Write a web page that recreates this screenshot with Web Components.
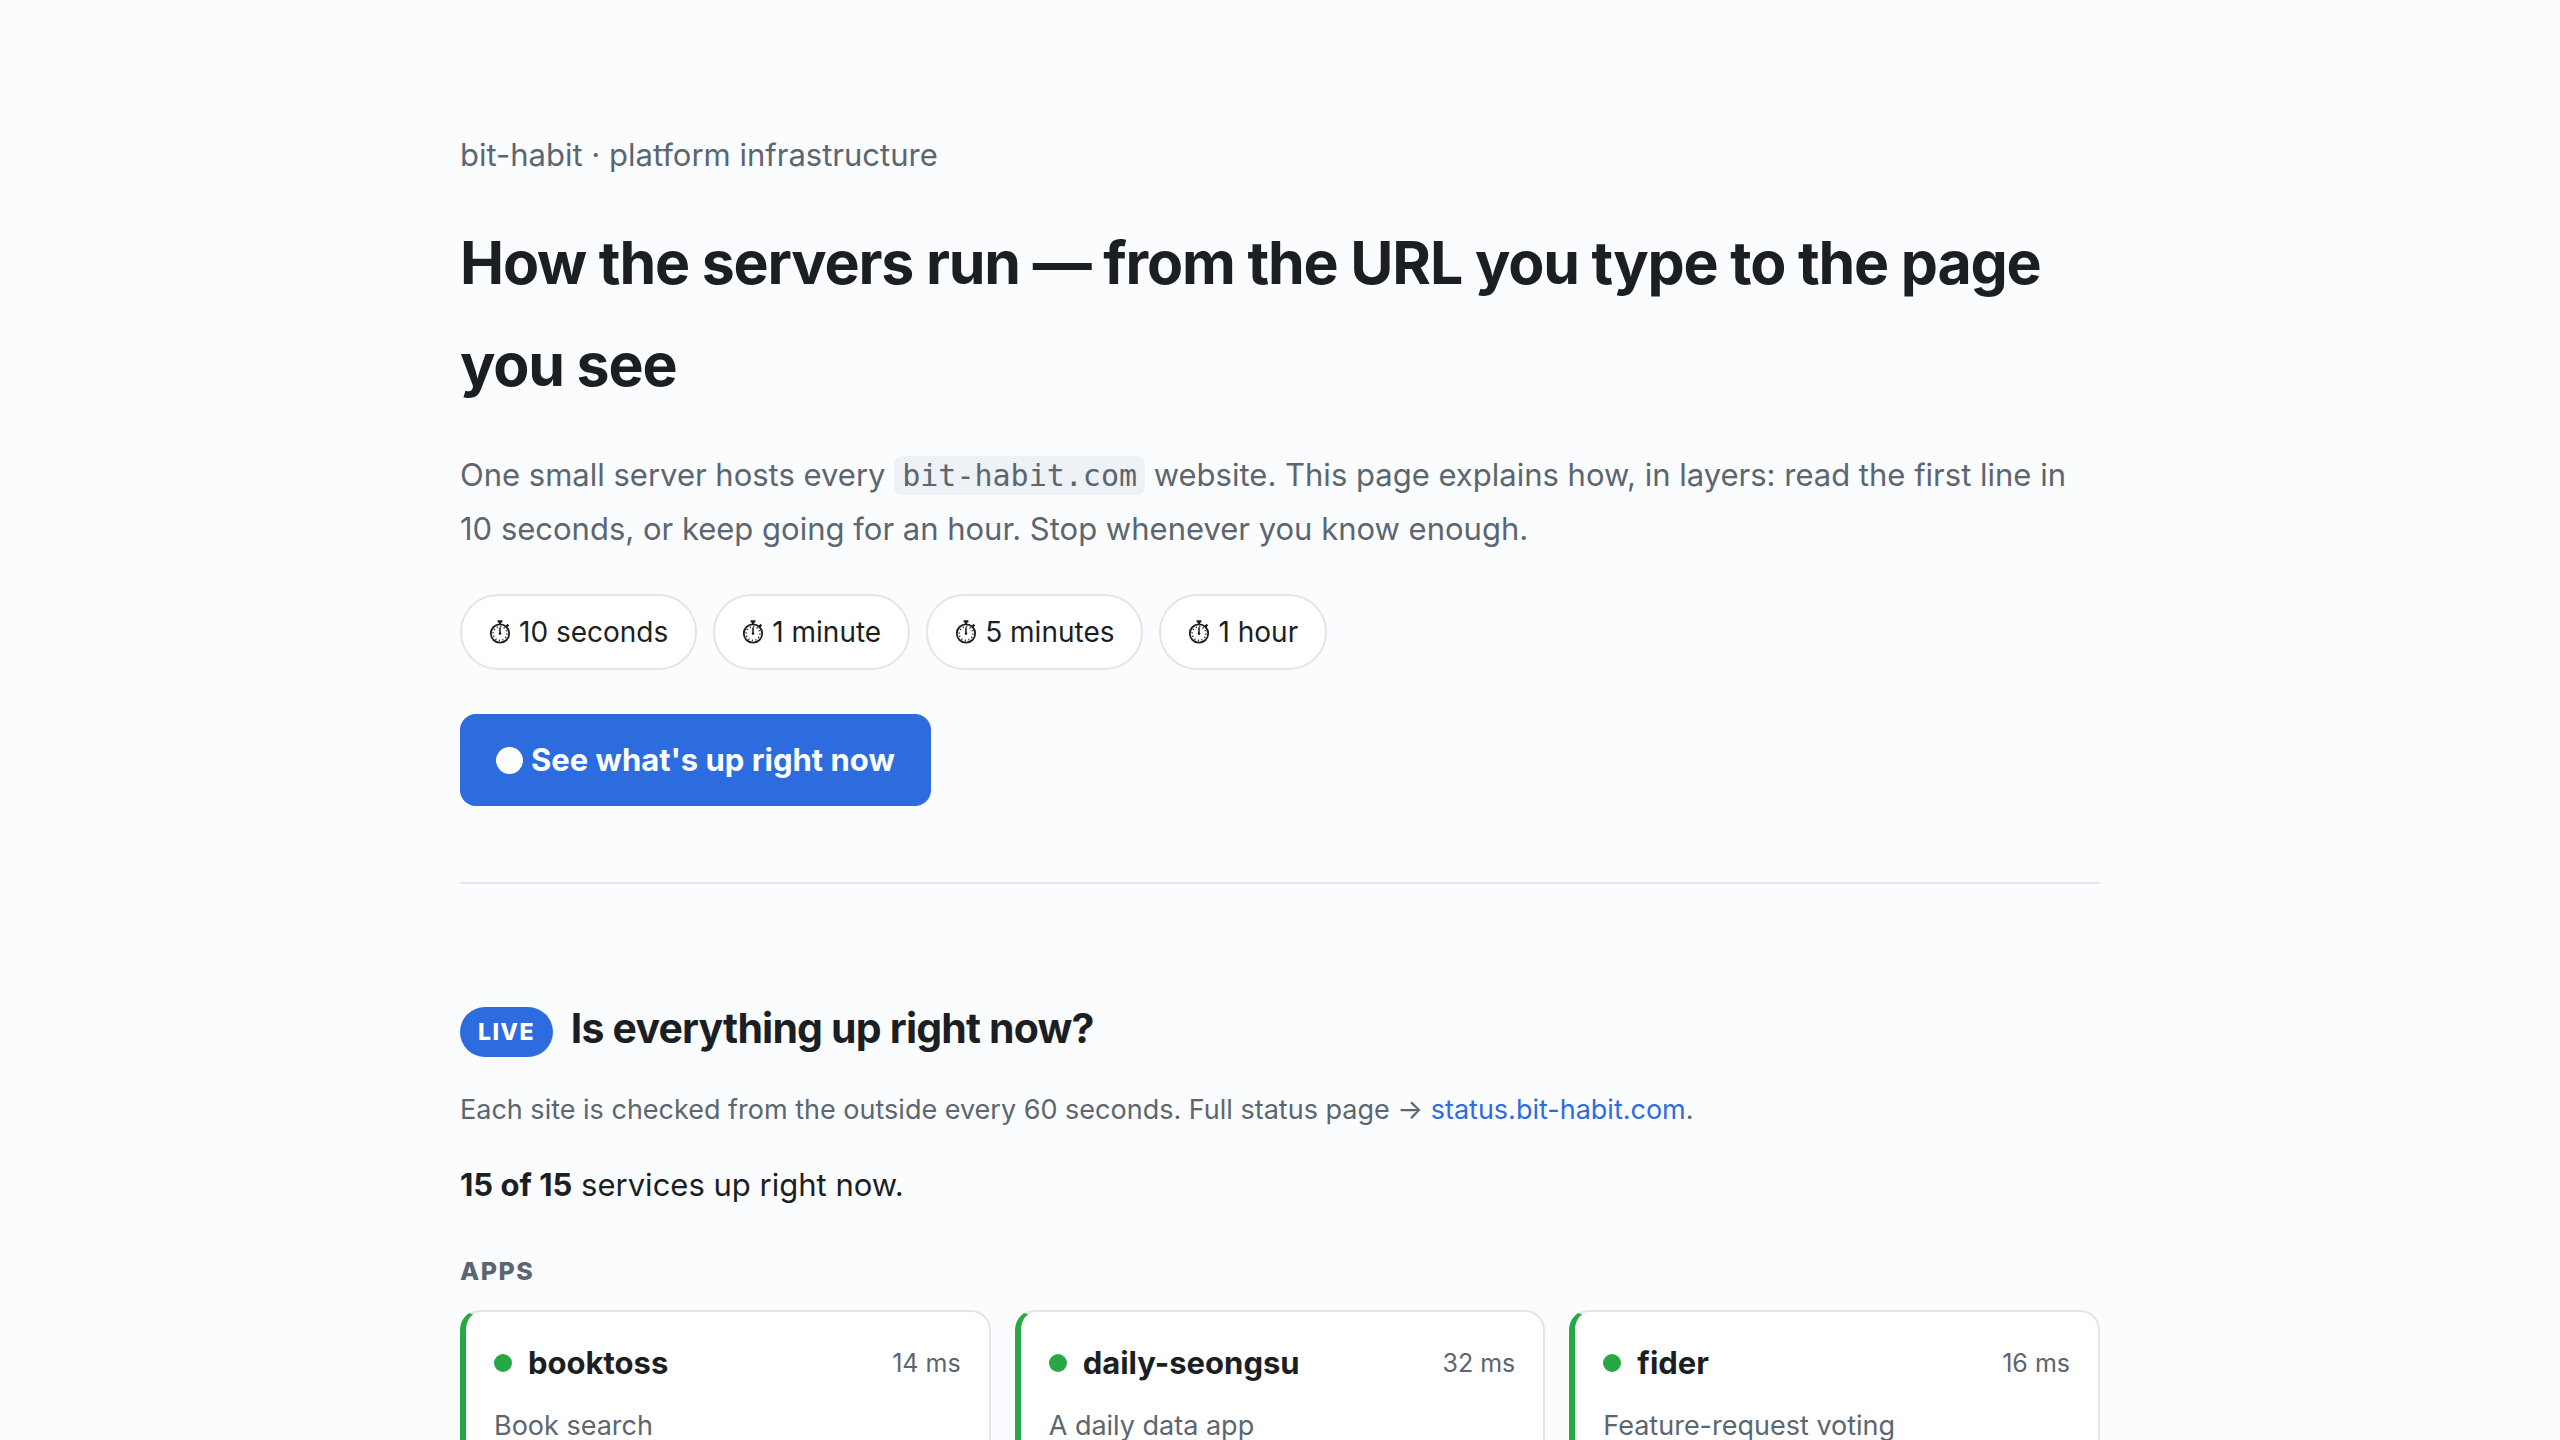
<!DOCTYPE html>
<html lang="en">
<head>
<meta charset="UTF-8">
<meta name="viewport" content="width=device-width, initial-scale=1.0">
<title>bit-habit · platform infrastructure</title>
<style>
    :root {
        --bg: #fbfcfe;
        --card: #ffffff;
        --ink: #1b1f24;
        --muted: #5b6670;
        --line: #e2e6eb;
        --code: #eef1f6;
        --accent: #2d6cdf;
        --up: #28a745;
    }
    * {
        box-sizing: border-box;
    }
    body {
        margin: 0;
        background: var(--bg);
        color: var(--ink);
        font-family: Inter, "Liberation Sans", sans-serif;
        font-size: 31px;
        line-height: 54px;
    }
    main {
        max-width: 1720px;
        margin: 0 auto;
        padding: 0 40px 128px;
    }
    .grid {
        display: grid;
        grid-template-columns: repeat(3, 1fr);
        gap: 24px;
    }
</style>
</head>
<body>
<main>
    <page-hero>
        <span slot="eyebrow">bit-habit · platform infrastructure</span>
        <span slot="title">How the servers run — from the URL you type to the page you see</span>
        <span slot="lead">One small server hosts every <inline-code>bit-habit.com</inline-code> website. This page explains how, in layers: read the first line in 10 seconds, or keep going for an hour. Stop whenever you know enough.</span>
        <time-pill slot="pills" href="#s10">10 seconds</time-pill>
        <time-pill slot="pills" href="#m1">1 minute</time-pill>
        <time-pill slot="pills" href="#m5">5 minutes</time-pill>
        <time-pill slot="pills" href="#h1">1 hour</time-pill>
        <cta-link slot="cta" href="#live">See what's up right now</cta-link>
    </page-hero>
    <status-section id="live" badge="LIVE" heading="Is everything up right now?">
        <status-note slot="note"></status-note>
        <status-group label="Apps">
            <div class="grid">
                <service-card name="booktoss" latency="14 ms">Book search</service-card>
                <service-card name="daily-seongsu" latency="32 ms">A daily data app</service-card>
                <service-card name="fider" latency="16 ms">Feature-request voting</service-card>
            </div>
        </status-group>
    </status-section>
</main>

<script>
class PageHero extends HTMLElement {
    constructor() {
        super();
        this.attachShadow({ mode: 'open' });
        this.shadowRoot.innerHTML = `
            <style>
                :host {
                    display: block;
                    padding: 128px 0 76px;
                    border-bottom: 2px solid var(--line);
                }
                p, h1 {
                    margin: 0;
                }
                .eyebrow {
                    color: var(--muted);
                }
                h1 {
                    margin-top: 30px;
                    font-size: 59px;
                    line-height: 102px;
                    font-weight: 700;
                    letter-spacing: -0.02em;
                }
                .lead {
                    margin-top: 32px;
                    color: var(--muted);
                }
                .pills {
                    display: flex;
                    flex-wrap: wrap;
                    gap: 16px;
                    margin: 38px 0 44px;
                }
            </style>
            <p class="eyebrow"><slot name="eyebrow"></slot></p>
            <h1><slot name="title"></slot></h1>
            <p class="lead"><slot name="lead"></slot></p>
            <nav class="pills"><slot name="pills"></slot></nav>
            <slot name="cta"></slot>
        `;
    }
}

class InlineCode extends HTMLElement {
    constructor() {
        super();
        this.attachShadow({ mode: 'open' });
        this.shadowRoot.innerHTML = `
            <style>
                :host {
                    display: inline;
                    line-height: 1;
                }
                code {
                    padding: 2px 8px;
                    border-radius: 8px;
                    background: var(--code);
                    font-family: "DejaVu Sans Mono", "Liberation Mono", monospace;
                    font-size: 30px;
                }
            </style>
            <code><slot></slot></code>
        `;
    }
}

class TimePill extends HTMLElement {
    constructor() {
        super();
        this.attachShadow({ mode: 'open' });
        this.shadowRoot.innerHTML = `
            <style>
                :host {
                    display: block;
                }
                a {
                    display: flex;
                    align-items: center;
                    gap: 8px;
                    padding: 12px 27px;
                    border: 2px solid var(--line);
                    border-radius: 38px;
                    background: var(--card);
                    color: var(--ink);
                    font-size: 28px;
                    line-height: 48px;
                    text-decoration: none;
                }
                a:hover {
                    border-color: var(--accent);
                }
                svg {
                    width: 22px;
                    height: 24px;
                }
            </style>
            <a>
                <svg viewBox="0 0 22 24" fill="none" stroke="currentColor" aria-hidden="true">
                    <circle cx="11" cy="13.5" r="9.2" stroke-width="1.8"/>
                    <circle cx="11" cy="13.5" r="6.9" stroke-width="1.6" stroke-dasharray="1.1 2.513"/>
                    <path d="M11 4V1.5M8.6 1.4h4.8M17.4 6.6l2-2" stroke-width="2.2"/>
                    <path d="M11 7.5v6" stroke-width="1.6"/>
                    <circle cx="11" cy="13.6" r="1.3" fill="currentColor" stroke="none"/>
                </svg>
                <span><slot></slot></span>
            </a>
        `;
    }

    connectedCallback() {
        this.shadowRoot.querySelector('a').href = this.getAttribute('href');
    }
}

class CtaLink extends HTMLElement {
    constructor() {
        super();
        this.attachShadow({ mode: 'open' });
        this.shadowRoot.innerHTML = `
            <style>
                :host {
                    display: flex;
                }
                a {
                    display: flex;
                    align-items: center;
                    gap: 8px;
                    padding: 19px 36px;
                    border-radius: 16px;
                    background: var(--accent);
                    color: #fff;
                    font-weight: 700;
                    text-decoration: none;
                }
                .dot {
                    width: 27px;
                    height: 27px;
                    border-radius: 50%;
                    background: #fff;
                }
            </style>
            <a><span class="dot"></span><span><slot></slot></span></a>
        `;
    }

    connectedCallback() {
        this.shadowRoot.querySelector('a').href = this.getAttribute('href');
    }
}

class StatusSection extends HTMLElement {
    constructor() {
        super();
        this.attachShadow({ mode: 'open' });
        this.shadowRoot.innerHTML = `
            <style>
                :host {
                    display: block;
                    padding-top: 108px;
                }
                h2 {
                    margin: 0;
                    font-size: 41px;
                    line-height: 72px;
                    font-weight: 700;
                    letter-spacing: -0.02em;
                }
                .badge {
                    display: inline-block;
                    vertical-align: middle;
                    margin-right: 18px;
                    padding: 0 18px;
                    border-radius: 25px;
                    background: var(--accent);
                    color: #fff;
                    font-size: 23px;
                    line-height: 50px;
                    font-weight: 800;
                    letter-spacing: 0.06em;
                }
            </style>
            <h2><span class="badge"></span><span class="text"></span></h2>
            <slot name="note"></slot>
            <slot></slot>
        `;
    }

    connectedCallback() {
        this.shadowRoot.querySelector('.badge').textContent = this.getAttribute('badge');
        this.shadowRoot.querySelector('.text').textContent = this.getAttribute('heading');
    }
}

class StatusNote extends HTMLElement {
    constructor() {
        super();
        this.attachShadow({ mode: 'open' });
        this.shadowRoot.innerHTML = `
            <style>
                :host {
                    display: block;
                }
                p {
                    margin: 0;
                }
                .hint {
                    margin-top: 22px;
                    font-size: 27px;
                    line-height: 48px;
                    color: var(--muted);
                }
                a {
                    color: var(--accent);
                    text-decoration: none;
                }
                .summary {
                    margin-top: 24px;
                }
            </style>
            <p class="hint">Each site is checked from the outside every 60 seconds. Full status page → <a href="https://status.bit-habit.com">status.bit-habit.com</a>.</p>
            <p class="summary"><strong>15 of 15</strong> services up right now.</p>
        `;
    }
}

class StatusGroup extends HTMLElement {
    constructor() {
        super();
        this.attachShadow({ mode: 'open' });
        this.shadowRoot.innerHTML = `
            <style>
                :host {
                    display: block;
                }
                h3 {
                    margin: 38px 0 18px;
                    color: var(--muted);
                    font-size: 25px;
                    line-height: 42px;
                    font-weight: 800;
                    letter-spacing: 0.06em;
                    text-transform: uppercase;
                }
            </style>
            <h3></h3>
            <slot></slot>
        `;
    }

    connectedCallback() {
        this.shadowRoot.querySelector('h3').textContent = this.getAttribute('label');
    }
}

class ServiceCard extends HTMLElement {
    constructor() {
        super();
        this.attachShadow({ mode: 'open' });
        this.shadowRoot.innerHTML = `
            <style>
                :host {
                    display: block;
                    padding: 24px 28px;
                    border: 2px solid var(--line);
                    border-left: 6px solid var(--up);
                    border-radius: 20px;
                    background: var(--card);
                }
                .top {
                    display: flex;
                    align-items: center;
                }
                .dot {
                    width: 18px;
                    height: 18px;
                    margin-right: 16px;
                    border-radius: 50%;
                    background: var(--up);
                }
                .name {
                    font-weight: 700;
                }
                .latency {
                    margin-left: auto;
                    color: var(--muted);
                    font-size: 25px;
                }
                .desc {
                    margin: 12px 0 0;
                    color: var(--muted);
                    font-size: 27px;
                    line-height: 48px;
                }
            </style>
            <div class="top">
                <span class="dot"></span>
                <span class="name"></span>
                <span class="latency"></span>
            </div>
            <p class="desc"><slot></slot></p>
        `;
    }

    static get observedAttributes() {
        return ['name', 'latency'];
    }

    attributeChangedCallback() {
        this.shadowRoot.querySelector('.name').textContent = this.getAttribute('name');
        this.shadowRoot.querySelector('.latency').textContent = this.getAttribute('latency');
    }
}

customElements.define('page-hero', PageHero);
customElements.define('inline-code', InlineCode);
customElements.define('time-pill', TimePill);
customElements.define('cta-link', CtaLink);
customElements.define('status-section', StatusSection);
customElements.define('status-note', StatusNote);
customElements.define('status-group', StatusGroup);
customElements.define('service-card', ServiceCard);
</script>
</body>
</html>
